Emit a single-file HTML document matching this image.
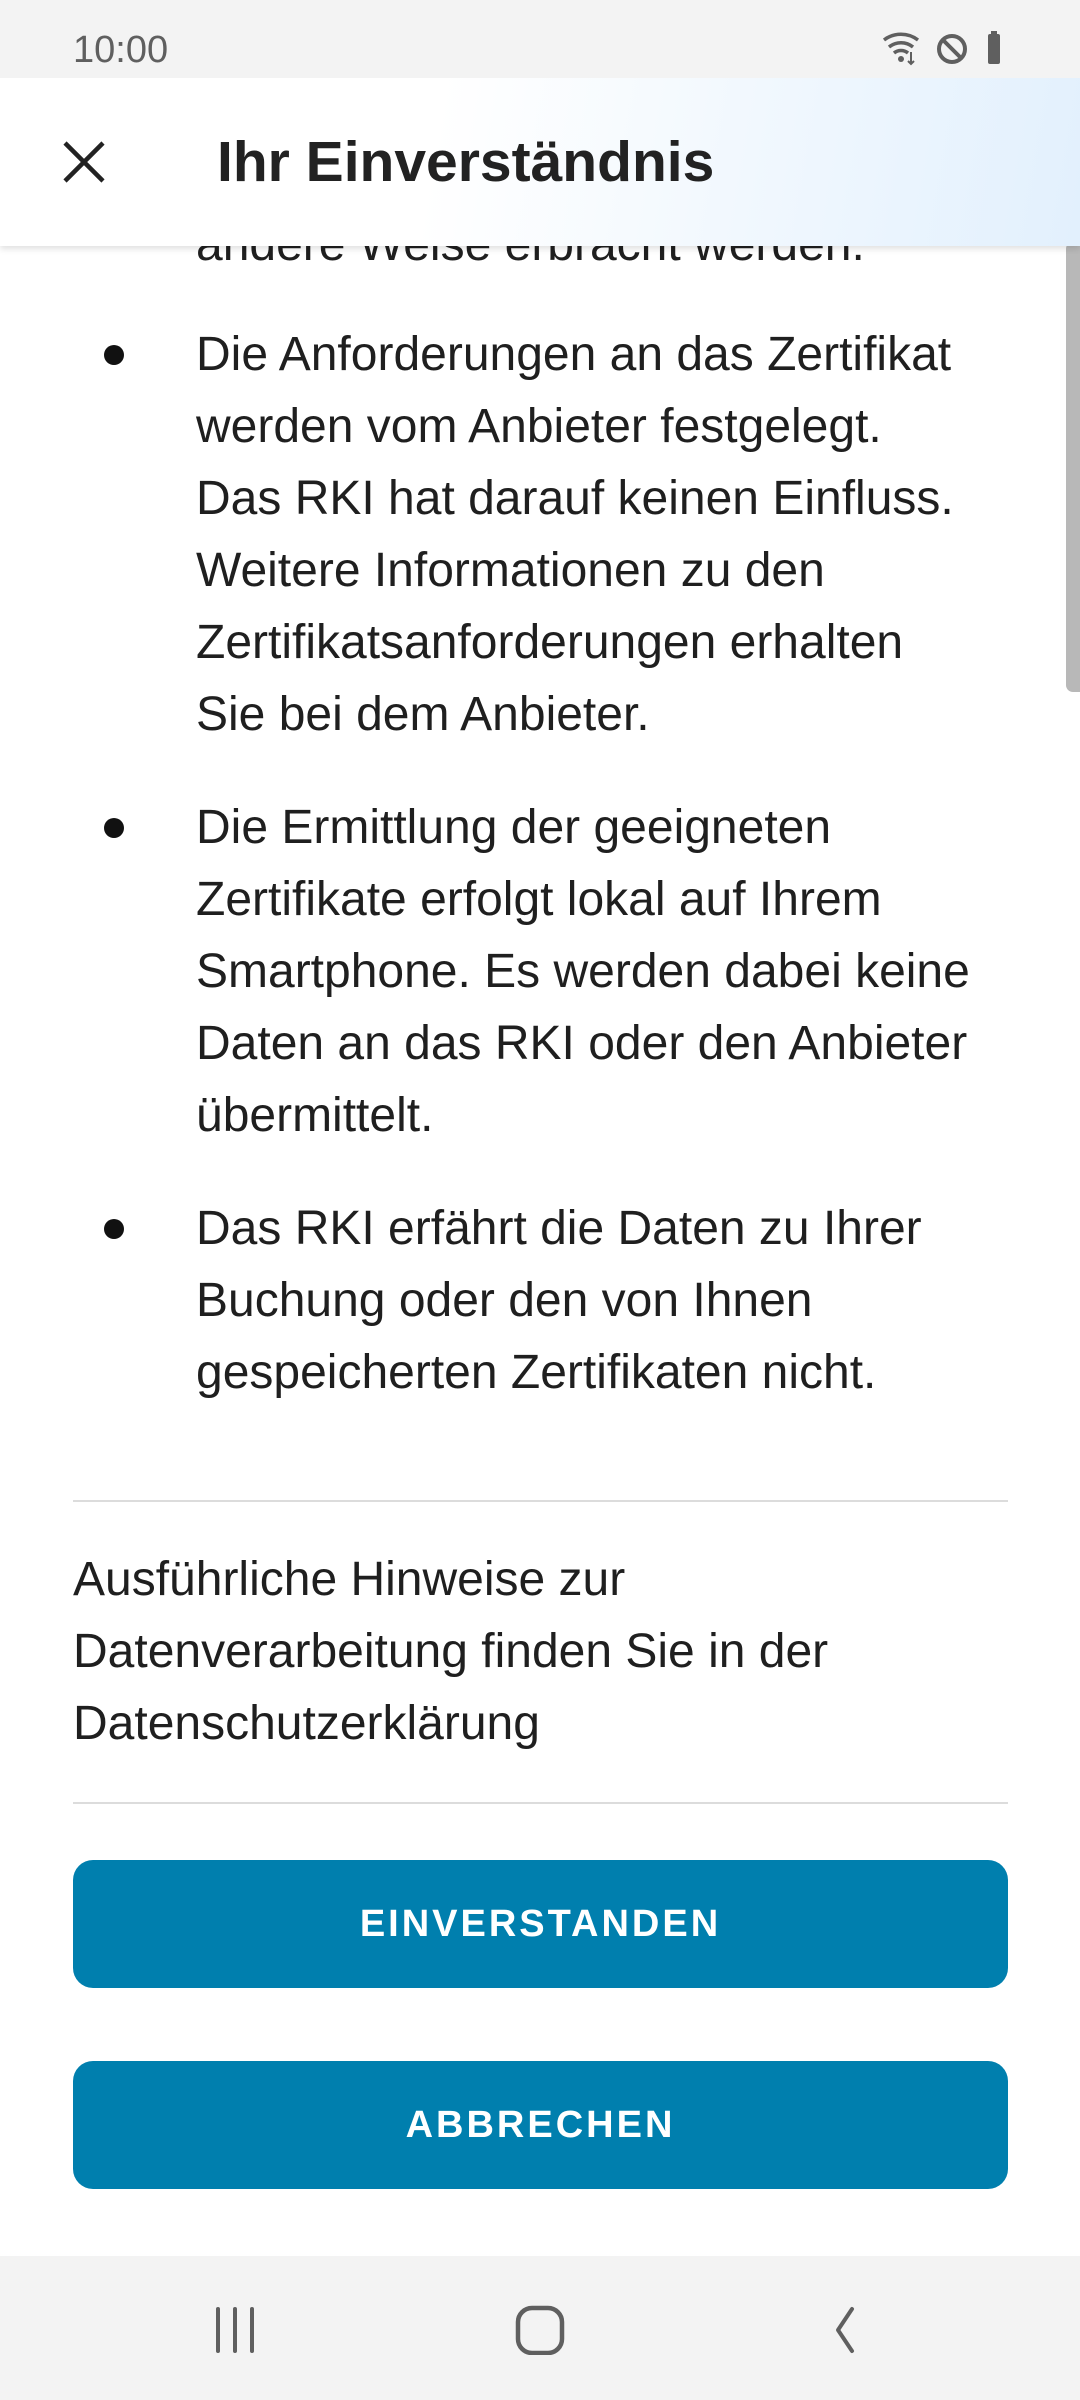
<!DOCTYPE html>
<html><head><meta charset="utf-8"><style>
*{margin:0;padding:0;box-sizing:border-box}
body{width:1080px;height:2400px;position:relative;overflow:hidden;background:#fff;font-family:"Liberation Sans",sans-serif;color:#1f1f1f}
.status{position:absolute;top:0;left:0;width:1080px;height:78px;background:#f3f3f3;z-index:3}
.time{position:absolute;left:73px;top:29px;font-size:38px;color:#5f5f5f}
.appbar{position:absolute;top:78px;left:0;width:1080px;height:168px;background:linear-gradient(100deg,#fff 40%,#e2f0fd 100%);z-index:2;box-shadow:0 3px 6px rgba(0,0,0,.12)}
.title{position:absolute;left:217px;top:51px;font-size:57px;font-weight:bold;color:#222}
.li{position:absolute;left:196px;font-size:48px;line-height:72px;width:880px;white-space:nowrap}
.bul{position:absolute;left:104px;width:20px;height:20px;border-radius:50%;background:#111}
.p{position:absolute;left:73px;top:1544px;font-size:48px;line-height:72px;width:960px;white-space:nowrap}
.hr{position:absolute;left:73px;width:935px;height:2px;background:#dcdcdc}
.btn{position:absolute;left:73px;width:935px;height:128px;background:#007fae;border-radius:20px;color:#fff;font-size:38px;font-weight:bold;letter-spacing:3px;text-align:center;line-height:128px}
.nav{position:absolute;top:2256px;left:0;width:1080px;height:144px;background:#f3f3f3}
.scroll{position:absolute;left:1066px;top:242px;width:14px;height:450px;background:#b8b8b8;border-radius:7px 0 0 7px}
</style></head><body>
<div class="status"><div class="time">10:00</div>
<svg style="position:absolute;left:880px;top:28px" width="140" height="40" viewBox="0 0 140 40">
<g fill="none" stroke="#5f5f5f" stroke-width="3.5"><path d="M4 12a28 28 0 0 1 34 0M9 19a19 19 0 0 1 24 0M14 25a11 11 0 0 1 14 0"/></g>
<circle cx="21" cy="31" r="3" fill="#5f5f5f"/>
<path d="M31 24v12M28 33l3 3 3-3" stroke="#5f5f5f" stroke-width="2" fill="none"/>
<circle cx="72" cy="21" r="13" fill="none" stroke="#5f5f5f" stroke-width="4"/><path d="M63 12l18 18" stroke="#5f5f5f" stroke-width="4"/>
<rect x="108" y="6" width="12" height="30" rx="2" fill="#5f5f5f"/><rect x="111" y="3" width="6" height="4" fill="#5f5f5f"/>
</svg></div>
<div class="appbar">
<svg style="position:absolute;left:62px;top:62px" width="44" height="44" viewBox="0 0 44 44"><path d="M3 3l38 38M41 3L3 41" stroke="#222" stroke-width="4.5"/></svg>
<div class="title">Ihr Einverständnis</div></div>
<div class="li" style="top:209px">andere Weise erbracht werden.</div>
<div class="bul" style="top:345px"></div>
<div class="li" style="top:319px">Die Anforderungen an das Zertifikat<br>werden vom Anbieter festgelegt.<br>Das RKI hat darauf keinen Einfluss.<br>Weitere Informationen zu den<br>Zertifikatsanforderungen erhalten<br>Sie bei dem Anbieter.</div>
<div class="bul" style="top:818px"></div>
<div class="li" style="top:792px">Die Ermittlung der geeigneten<br>Zertifikate erfolgt lokal auf Ihrem<br>Smartphone. Es werden dabei keine<br>Daten an das RKI oder den Anbieter<br>übermittelt.</div>
<div class="bul" style="top:1219px"></div>
<div class="li" style="top:1193px">Das RKI erfährt die Daten zu Ihrer<br>Buchung oder den von Ihnen<br>gespeicherten Zertifikaten nicht.</div>
<div class="hr" style="top:1500px"></div>
<div class="p">Ausführliche Hinweise zur<br>Datenverarbeitung finden Sie in der<br>Datenschutzerklärung</div>
<div class="hr" style="top:1802px"></div>
<div class="btn" style="top:1860px">EINVERSTANDEN</div>
<div class="btn" style="top:2061px">ABBRECHEN</div>
<div class="scroll"></div>
<div class="nav">
<svg style="position:absolute;left:210px;top:49px" width="50" height="50" viewBox="0 0 50 50"><path d="M8 4v42M25 4v42M42 4v42" stroke="#5f5f5f" stroke-width="4" stroke-linecap="round"/></svg>
<svg style="position:absolute;left:515px;top:49px" width="50" height="50" viewBox="0 0 50 50"><rect x="3" y="3" width="44" height="45" rx="14" fill="none" stroke="#5f5f5f" stroke-width="4.5"/></svg>
<svg style="position:absolute;left:824px;top:49px" width="40" height="50" viewBox="0 0 40 50"><path d="M28 4L14 25l14 21" fill="none" stroke="#5f5f5f" stroke-width="4" stroke-linecap="round" stroke-linejoin="round"/></svg>
</div>
</body></html>
